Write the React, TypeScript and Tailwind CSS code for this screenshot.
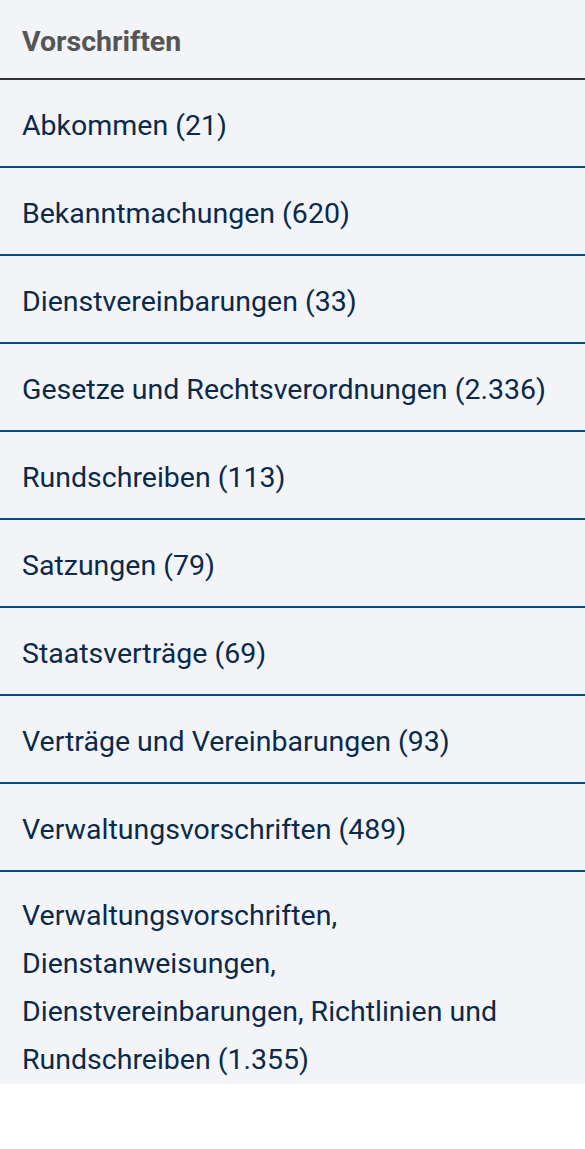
const items = [
  "Abkommen (21)",
  "Bekanntmachungen (620)",
  "Dienstvereinbarungen (33)",
  "Gesetze und Rechtsverordnungen (2.336)",
  "Rundschreiben (113)",
  "Satzungen (79)",
  "Staatsverträge (69)",
  "Verträge und Vereinbarungen (93)",
  "Verwaltungsvorschriften (489)",
];

export default function App() {
  return (
    <div className="w-[585px] bg-white font-['Roboto',sans-serif] text-[28.5px] leading-[48px]">
      <div className="bg-[#f2f4f8]">
        <h2 className="border-b-2 border-[#333333] pl-[22px] pt-[18px] pb-[12px] font-bold text-[#555555]">
          Vorschriften
        </h2>
        <ul className="text-[#0b2a4a]">
          {items.map((label) => (
            <li
              key={label}
              className="border-b-2 border-[#0c4a86] pl-[22px] pr-4 pt-[22px] pb-[16px] whitespace-nowrap"
            >
              {label}
            </li>
          ))}
          <li className="pl-[22px] pr-4 pt-[20px]">
            Verwaltungsvorschriften,
            <br />
            Dienstanweisungen,
            <br />
            Dienstvereinbarungen, Richtlinien und
            <br />
            Rundschreiben (1.355)
          </li>
        </ul>
      </div>
    </div>
  );
}
